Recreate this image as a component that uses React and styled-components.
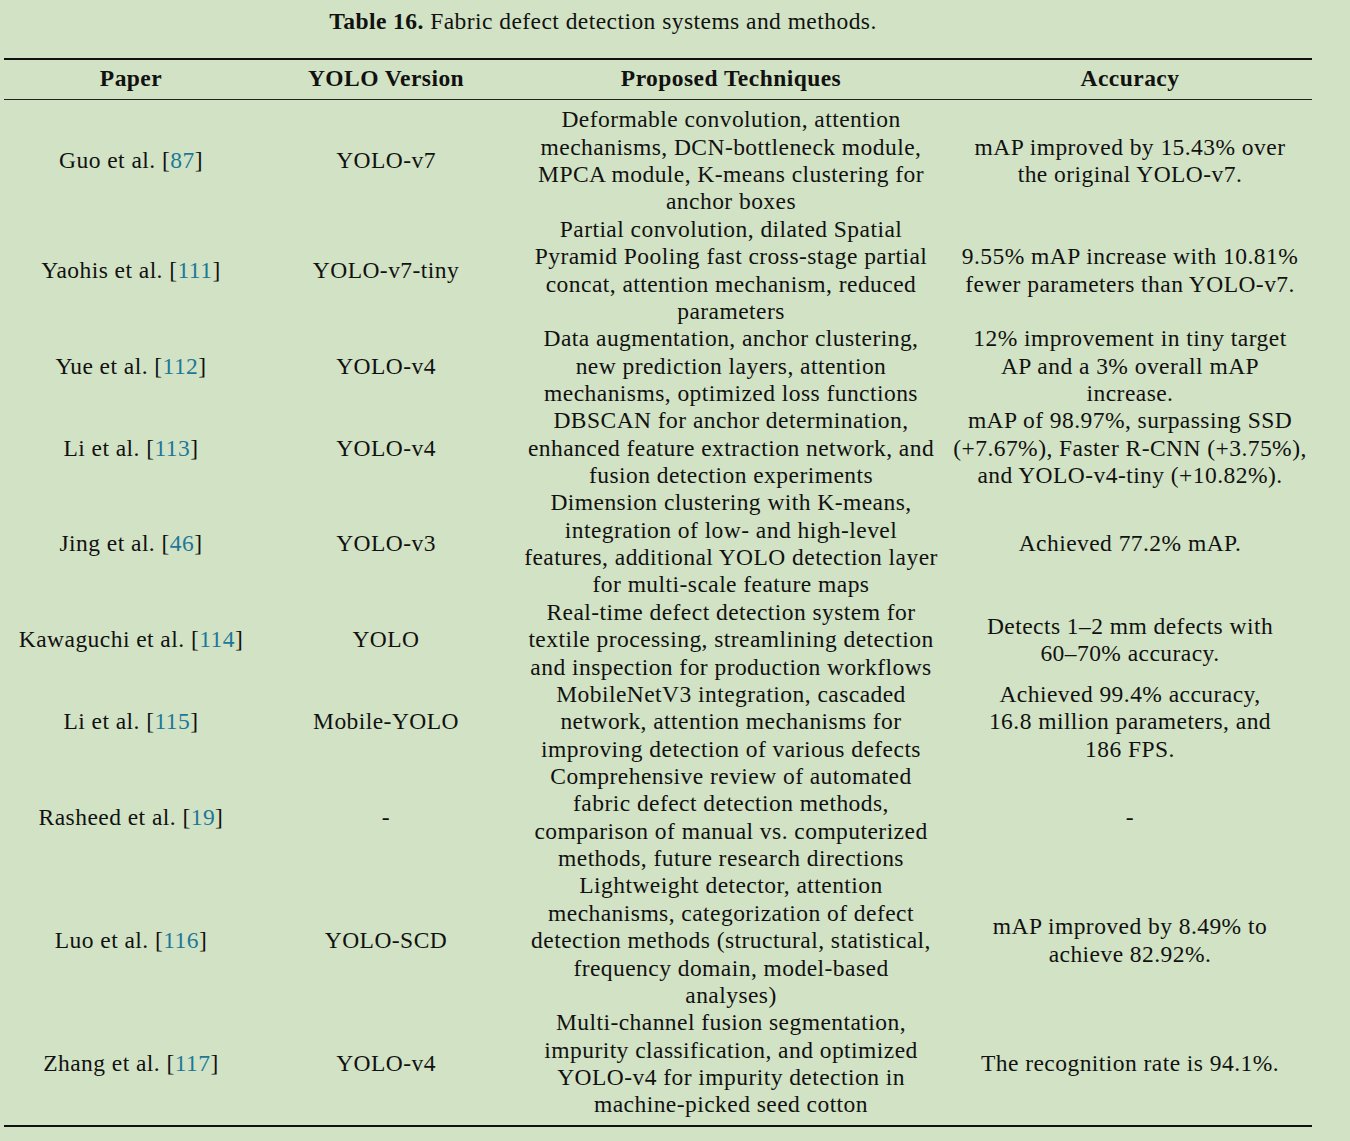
import React from "react";
import styled, { createGlobalStyle } from "styled-components";

const GlobalStyle = createGlobalStyle`
  html, body {
    margin: 0;
    background: #d1e3c4;
  }
  body {
    font-family: "Liberation Serif", "Times New Roman", serif;
    color: #111;
  }
`;

const COLS = "254px 256px 434px 364px";

const rows = [
  {
    author: "Guo et al.", ref: "87", version: ["YOLO-v7"],
    tech: ["Deformable convolution, attention", "mechanisms, DCN-bottleneck module,", "MPCA module, K-means clustering for", "anchor boxes"],
    acc: ["mAP improved by 15.43% over", "the original YOLO-v7."],
  },
  {
    author: "Yaohis et al.", ref: "111", version: ["YOLO-v7-tiny"],
    tech: ["Partial convolution, dilated Spatial", "Pyramid Pooling fast cross-stage partial", "concat, attention mechanism, reduced", "parameters"],
    acc: ["9.55% mAP increase with 10.81%", "fewer parameters than YOLO-v7."],
  },
  {
    author: "Yue et al.", ref: "112", version: ["YOLO-v4"],
    tech: ["Data augmentation, anchor clustering,", "new prediction layers, attention", "mechanisms, optimized loss functions"],
    acc: ["12% improvement in tiny target", "AP and a 3% overall mAP", "increase."],
  },
  {
    author: "Li et al.", ref: "113", version: ["YOLO-v4"],
    tech: ["DBSCAN for anchor determination,", "enhanced feature extraction network, and", "fusion detection experiments"],
    acc: ["mAP of 98.97%, surpassing SSD", "(+7.67%), Faster R-CNN (+3.75%),", "and YOLO-v4-tiny (+10.82%)."],
  },
  {
    author: "Jing et al.", ref: "46", version: ["YOLO-v3"],
    tech: ["Dimension clustering with K-means,", "integration of low- and high-level", "features, additional YOLO detection layer", "for multi-scale feature maps"],
    acc: ["Achieved 77.2% mAP."],
  },
  {
    author: "Kawaguchi et al.", ref: "114", version: ["YOLO"],
    tech: ["Real-time defect detection system for", "textile processing, streamlining detection", "and inspection for production workflows"],
    acc: ["Detects 1–2 mm defects with", "60–70% accuracy."],
  },
  {
    author: "Li et al.", ref: "115", version: ["Mobile-YOLO"],
    tech: ["MobileNetV3 integration, cascaded", "network, attention mechanisms for", "improving detection of various defects"],
    acc: ["Achieved 99.4% accuracy,", "16.8 million parameters, and", "186 FPS."],
  },
  {
    author: "Rasheed et al.", ref: "19", version: ["-"],
    tech: ["Comprehensive review of automated", "fabric defect detection methods,", "comparison of manual vs. computerized", "methods, future research directions"],
    acc: ["-"],
  },
  {
    author: "Luo et al.", ref: "116", version: ["YOLO-SCD"],
    tech: ["Lightweight detector, attention", "mechanisms, categorization of defect", "detection methods (structural, statistical,", "frequency domain, model-based", "analyses)"],
    acc: ["mAP improved by 8.49% to", "achieve 82.92%."],
  },
  {
    author: "Zhang et al.", ref: "117", version: ["YOLO-v4"],
    tech: ["Multi-channel fusion segmentation,", "impurity classification, and optimized", "YOLO-v4 for impurity detection in", "machine-picked seed cotton"],
    acc: ["The recognition rate is 94.1%."],
  },
];

const Page = styled.div`
  padding: 8px 0 0 4px;
  font-size: 23.5px;
  letter-spacing: 0.45px;
`;

const Caption = styled.div`
  width: 1198px;
  text-align: center;
  line-height: 26px;
  b {
    font-weight: 700;
  }
`;

const Table = styled.div`
  width: 1308px;
  margin-top: 24px;
  border-top: 2px solid #111;
  border-bottom: 2px solid #111;
  line-height: 27.36px;
`;

const HeadRow = styled.div`
  display: grid;
  grid-template-columns: ${COLS};
  padding: 5px 0 7px;
  border-bottom: 1px solid #222;
  font-weight: 700;
  text-align: center;
`;

const Body = styled.div`
  padding: 6px 0 6px;
`;

const Row = styled.div`
  display: grid;
  grid-template-columns: ${COLS};
  align-items: center;
  text-align: center;
`;

const Cell = styled.div`
  display: flex;
  flex-direction: column;
  align-items: center;
`;

const Line = styled.span`
  white-space: nowrap;
`;

const Ref = styled.span`
  color: #1d7898;
`;

const Lines = ({ items }) => (
  <Cell>
    {items.map((t, i) => (
      <Line key={i}>{t}</Line>
    ))}
  </Cell>
);

export default function App() {
  return (
    <Page>
      <GlobalStyle />
      <Caption>
        <b>Table 16.</b> Fabric defect detection systems and methods.
      </Caption>
      <Table>
        <HeadRow>
          <div>Paper</div>
          <div>YOLO Version</div>
          <div>Proposed Techniques</div>
          <div>Accuracy</div>
        </HeadRow>
        <Body>
          {rows.map((r, i) => (
            <Row key={i}>
              <Cell>
                <Line>
                  {r.author} [<Ref>{r.ref}</Ref>]
                </Line>
              </Cell>
              <Lines items={r.version} />
              <Lines items={r.tech} />
              <Lines items={r.acc} />
            </Row>
          ))}
        </Body>
      </Table>
    </Page>
  );
}
